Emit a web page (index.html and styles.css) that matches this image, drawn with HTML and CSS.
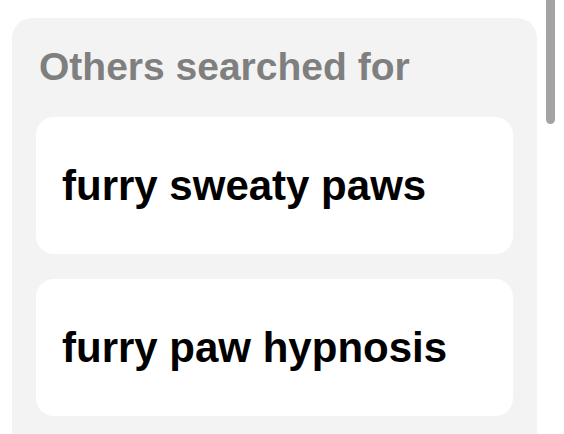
FILE: index.html
```html
<!DOCTYPE html>
<html lang="en">
<head>
<meta charset="utf-8">
<title>Others searched for</title>
<link rel="stylesheet" href="styles.css">
</head>
<body>
<section class="panel">
  <h2 class="panel-title">Others searched for</h2>
  <div class="list">
    <a class="item" href="#">furry sweaty paws</a>
    <a class="item" href="#">furry paw hypnosis</a>
  </div>
</section>
<div class="scrollbar"></div>
</body>
</html>
```
FILE: styles.css
```css
html, body {
  margin: 0;
  padding: 0;
  background: #ffffff;
  overflow: hidden;
  height: 100%;
}
body {
  font-family: "Liberation Sans", Arial, sans-serif;
  padding: 18px 27px 0 12px;
  box-sizing: border-box;
  display: flex;
  flex-direction: column;
}
.panel {
  flex: 1;
  min-height: 0;
  overflow: hidden;
  background: #f3f3f3;
  border-radius: 20px 20px 0 0;
  padding: 27px 24px 0 24px;
  box-sizing: border-box;
}
.panel-title {
  margin: 0 0 28px 3px;
  font-size: 39px;
  font-weight: 700;
  color: #7f7f7f;
  line-height: normal;
}
.list {
  display: flex;
  flex-direction: column;
  gap: 25px;
}
.item {
  display: flex;
  align-items: center;
  flex: none;
  height: 137px;
  box-sizing: border-box;
  padding: 0 26px;
  background: #ffffff;
  border-radius: 18px;
  color: #000000;
  font-size: 42px;
  font-weight: 700;
  text-decoration: none;
}
.scrollbar {
  position: absolute;
  top: 0;
  left: 546px;
  width: 9px;
  height: 124px;
  background: #a3a3a3;
  border-radius: 0 0 5px 5px;
}
```
